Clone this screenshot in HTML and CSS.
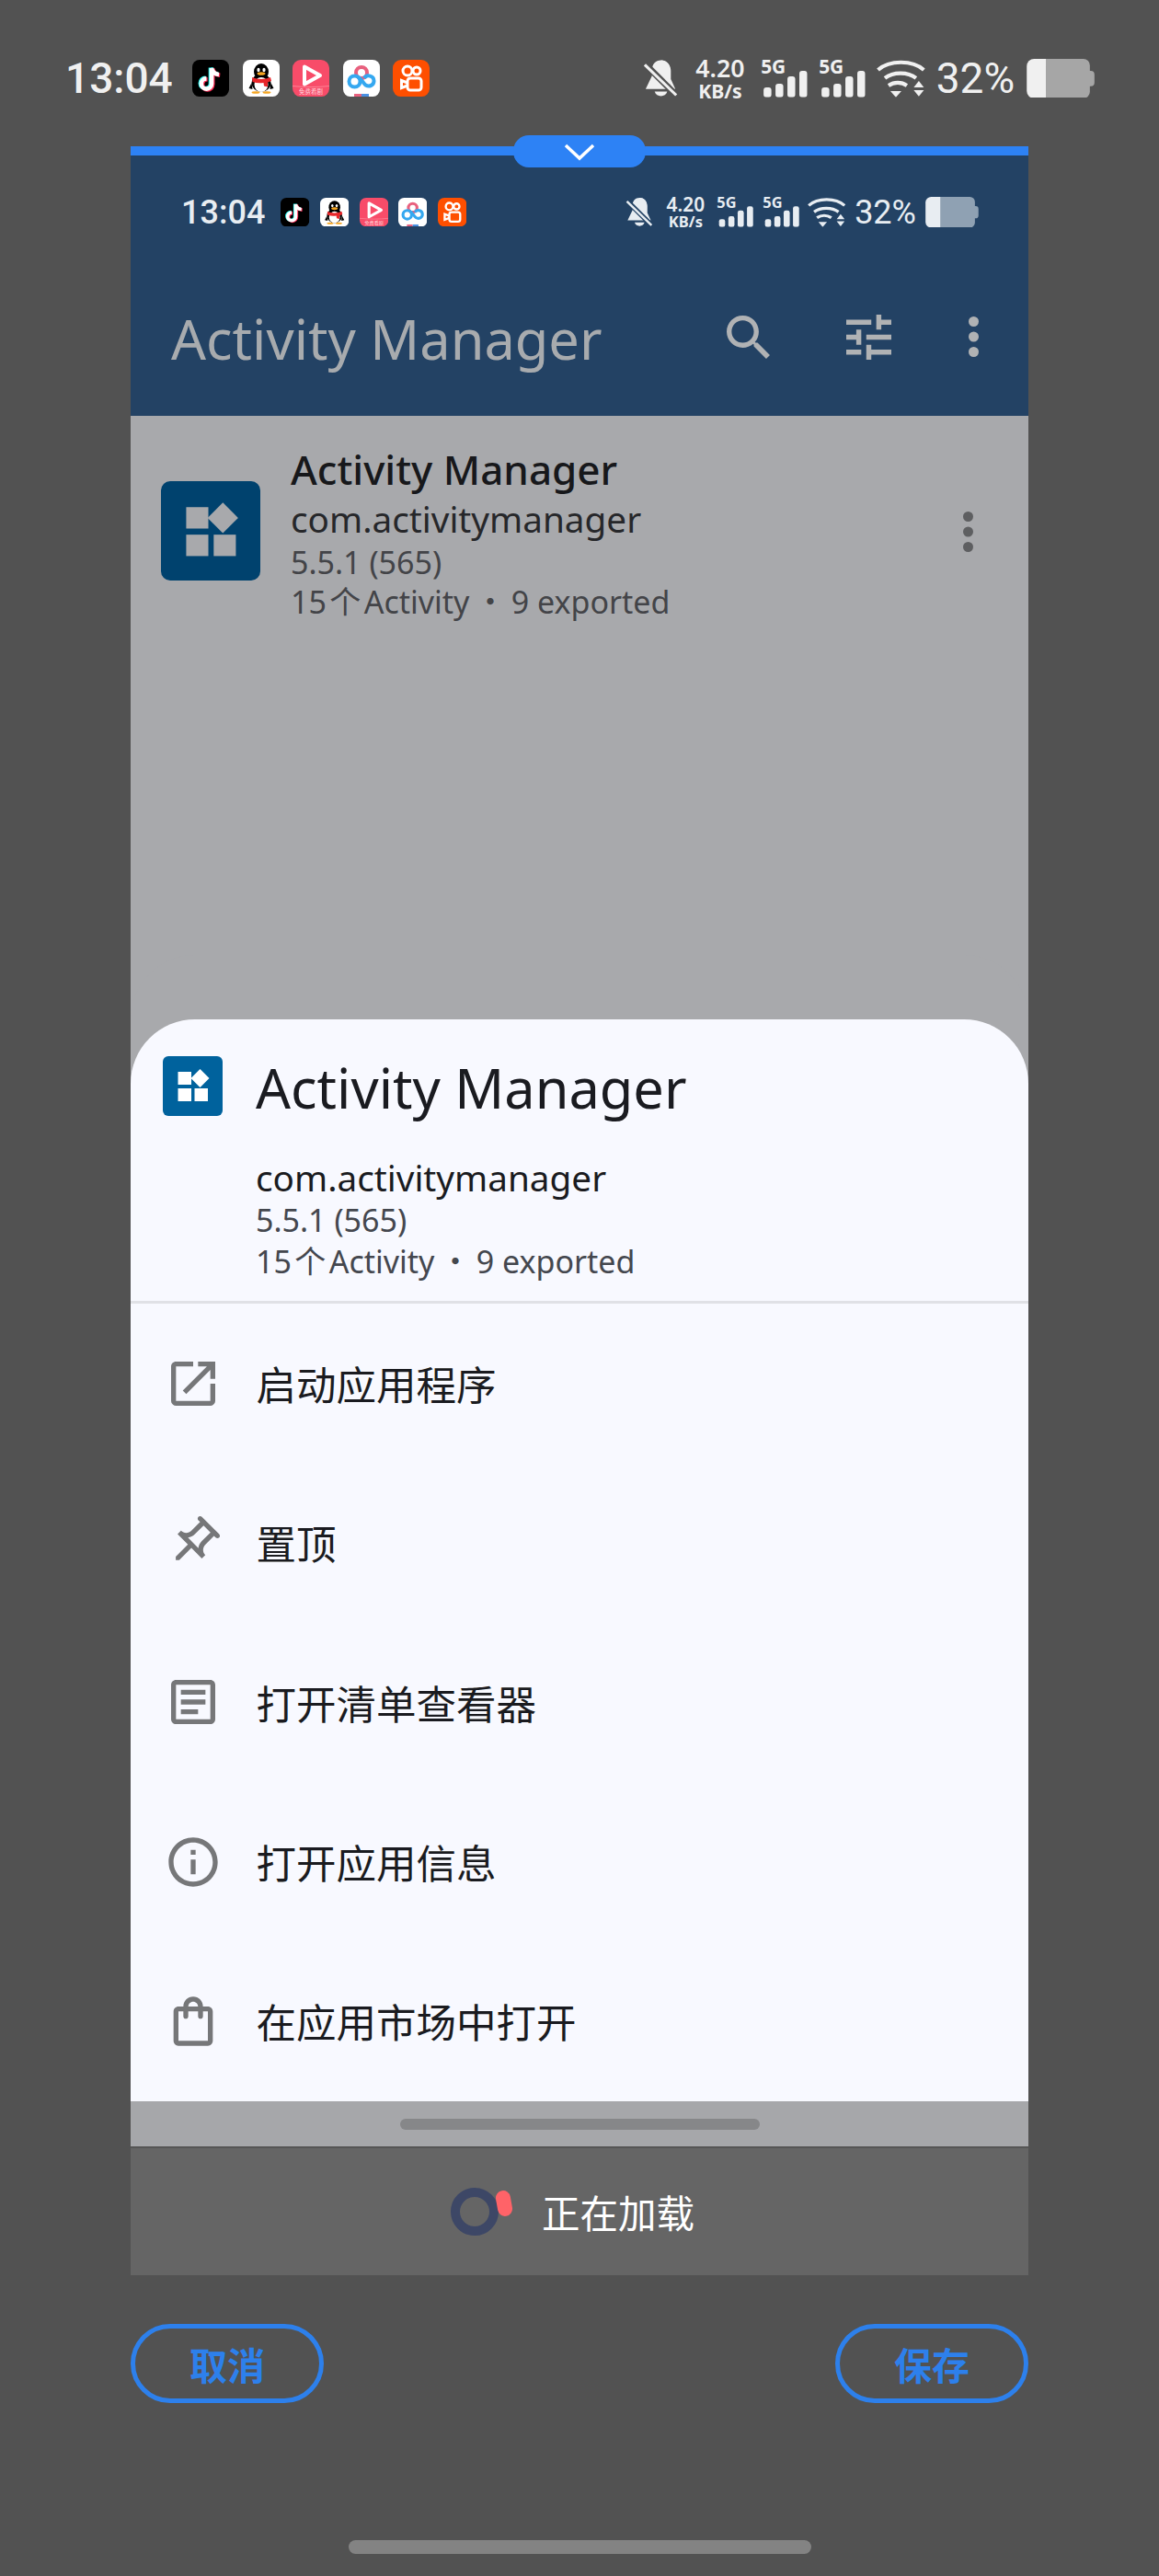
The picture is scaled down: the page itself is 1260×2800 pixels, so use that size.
FILE: index.html
```html
<!DOCTYPE html>
<html lang="en">
<head>
  <meta charset="UTF-8">
  <meta name="viewport" content="width=device-width, initial-scale=1.0">
  <title>Activity Manager</title>
  <link rel="stylesheet" href="styles.css">
</head>
<body>
<svg class="defs" width="0" height="0">
  <symbol id="app-tiktok" viewBox="0 0 40 40">
    <rect width="40" height="40" rx="8" fill="#000"/>
    <g fill="none" stroke-width="4.6">
      <path d="M21 9V26a5.6 5.6 0 1 1-5.6-5.6M21 9c.8 4 3.8 6.6 8 7" stroke="#25f4ee" transform="translate(-1 -.6)"/>
      <path d="M21 9V26a5.6 5.6 0 1 1-5.6-5.6M21 9c.8 4 3.8 6.6 8 7" stroke="#fe2c55" transform="translate(1.2 .8)"/>
      <path d="M21 9V26a5.6 5.6 0 1 1-5.6-5.6M21 9c.8 4 3.8 6.6 8 7" stroke="#fff"/>
    </g>
  </symbol>
  <symbol id="app-qq" viewBox="0 0 40 40">
    <rect width="40" height="40" rx="8" fill="#fff"/>
    <ellipse cx="20" cy="13" rx="8" ry="9" fill="#000"/>
    <ellipse cx="20" cy="25" rx="10.5" ry="10" fill="#000"/>
    <path d="M9.500 25 6.500 31l4 1zM30.500 25l3 6-4 1z" fill="#000"/>
    <ellipse cx="20" cy="27" rx="7.5" ry="8" fill="#fff"/>
    <ellipse cx="17" cy="11" rx="1.6" ry="2.2" fill="#fff"/>
    <ellipse cx="23" cy="11" rx="1.6" ry="2.2" fill="#fff"/>
    <ellipse cx="20" cy="15" rx="4.5" ry="1.8" fill="#f5a623"/>
    <path d="M10 19c6 2.600 14 2.600 20 0l1 4-4 1.500 0 5-4-1-.5-3.500c-4 .6-8 .4-12-1z" fill="#e8262a"/>
    <ellipse cx="14" cy="35.5" rx="4.5" ry="1.3" fill="#f5a623"/>
    <ellipse cx="26" cy="35.5" rx="4.5" ry="1.3" fill="#f5a623"/>
  </symbol>
  <symbol id="app-play" viewBox="0 0 40 40">
    <rect width="40" height="40" rx="9" fill="#f84c69"/>
    <path d="M13 7.500 30 17 13 26.500z" fill="none" stroke="#fff" stroke-width="4" stroke-linejoin="round"/>
    <path d="M0 28.500c13 1.400 27 1.400 40 0" fill="none" stroke="#ff9aa8" stroke-width=".7"/>
  </symbol>
  <symbol id="app-baidu" viewBox="0 0 40 40">
    <rect width="40" height="40" rx="8" fill="#fff"/>
    <g fill="none" stroke-width="4">
      <circle cx="20" cy="14" r="6" stroke="#e8607e"/>
      <circle cx="12.5" cy="23.5" r="6" stroke="#35a8f0"/>
      <path d="M16 19c4 1 5 6 8.500 8.500 4 2.500 9 0 9-4.500 0-6-8-7.500-10.500-3" stroke="#35a8f0"/>
    </g>
    <rect x="12" y="37" width="8" height="3" fill="#e8607e"/>
    <rect x="20" y="37" width="8" height="3" fill="#4a90e2"/>
  </symbol>
  <symbol id="app-kuaishou" viewBox="0 0 40 40">
    <rect width="40" height="40" rx="9" fill="#fe4f00"/>
    <g fill="none" stroke="#fff" stroke-width="3">
      <circle cx="16" cy="12" r="5"/>
      <circle cx="26" cy="12" r="4"/>
      <rect x="16" y="20" width="15" height="13" rx="3"/>
      <path d="M16 25 9.500 22.500v8L16 28"/>
    </g>
  </symbol>
  <symbol id="ic-bell" viewBox="0 0 40 42">
    <path d="M20 1c-6 0-10 4.500-10 11v6.500L3 33h27L30.500 12C30 5.500 26 1 20 1z" fill="currentColor"/>
    <path d="M20 1c7.500 0 11 6 11 12v9l5 11H32z" fill="currentColor"/>
    <path d="M13 36h14c-1 3.500-4 5-7 5s-6-1.500-7-5z" fill="currentColor"/>
    <path d="M2 5 37 40" stroke="var(--status-bg)" stroke-width="7"/>
    <path d="M2 6 37 40" stroke="currentColor" stroke-width="3.2"/>
  </symbol>
  <symbol id="ic-bars" viewBox="0 0 50 42">
    <g fill="currentColor">
      <rect x="2" y="31" width="8.5" height="11" rx="3"/>
      <rect x="15" y="27" width="8.5" height="15" rx="3"/>
      <rect x="28" y="19" width="8.5" height="23" rx="3"/>
      <rect x="41" y="13" width="8.5" height="29" rx="3"/>
    </g>
  </symbol>
  <symbol id="ic-wifi" viewBox="0 0 53 42">
    <g fill="none" stroke="currentColor" stroke-width="4.2">
      <path d="M1.500 12C14 1 39 1 51.500 12"/>
      <path d="M9 21c9-7 25-7 34 0"/>
      <path d="M15 30c6-4 14-4 20 0" transform="translate(-2 -1)"/>
    </g>
    <g fill="currentColor">
      <path d="M18 35h12l-6 7z" transform="translate(-3 0)"/>
      <path d="M46 24l5.500 7h-11z"/>
      <path d="M40.500 34h11L46 41z"/>
    </g>
  </symbol>
  <symbol id="ic-battery" viewBox="0 0 74 43">
    <path class="bat-rest" d="M21 0H62a7 7 0 0 1 7 7v6h1a4 4 0 0 1 4 4v9a4 4 0 0 1-4 4h-1v6a7 7 0 0 1-7 7H21z"/>
    <path d="M21 0H8a8 8 0 0 0-8 8V35a8 8 0 0 0 8 8H21z" fill="currentColor"/>
  </symbol>
  <symbol id="app-manager" viewBox="0 0 65 65">
    <rect width="65" height="65" rx="6" fill="currentColor"/>
    <g class="app-glyph">
      <rect x="16.500" y="17" width="14.500" height="14"/>
      <rect x="16.500" y="35" width="14.500" height="14"/>
      <rect x="34.500" y="35" width="14.500" height="14"/>
      <path d="M40.500 14 50.500 24 40.500 34 30.500 24z"/>
    </g>
  </symbol>
</svg>

<div class="screen">
  <div class="status status-outer">
    <div class="status-left">
      <span class="status-time">13:04</span>
      <div class="status-apps">
        <svg class="app-icon"><use href="#app-tiktok"/></svg>
        <svg class="app-icon"><use href="#app-qq"/></svg>
        <svg class="app-icon" viewBox="0 0 40 40"><use href="#app-play"/><text class="app-play-text" x="20" y="37" text-anchor="middle">免费看剧</text></svg>
        <svg class="app-icon"><use href="#app-baidu"/></svg>
        <svg class="app-icon"><use href="#app-kuaishou"/></svg>
      </div>
    </div>
    <div class="status-right">
      <svg class="st-bell"><use href="#ic-bell"/></svg>
      <div class="st-speed"><b>4.20</b><span>KB/s</span></div>
      <svg class="st-signal" viewBox="0 0 50 42"><use href="#ic-bars"/><text class="sig-text" x="-1" y="16">5G</text></svg>
      <svg class="st-signal st-signal-2" viewBox="0 0 50 42"><use href="#ic-bars"/><text class="sig-text" x="-1" y="16">5G</text></svg>
      <svg class="st-wifi"><use href="#ic-wifi"/></svg>
      <span class="st-percent">32%</span>
      <svg class="st-battery"><use href="#ic-battery"/></svg>
    </div>
  </div>

  <div class="frame">
    <div class="frame-handle">
      <svg width="34" height="20" viewBox="0 0 34 20"><path d="M2 3 17 17 32 3" fill="none" stroke="#fff" stroke-width="3.5"/></svg>
    </div>

    <header class="app-bar">
      <div class="status status-inner">
        <div class="status-left">
          <span class="status-time">13:04</span>
          <div class="status-apps">
            <svg class="app-icon"><use href="#app-tiktok"/></svg>
            <svg class="app-icon"><use href="#app-qq"/></svg>
            <svg class="app-icon" viewBox="0 0 40 40"><use href="#app-play"/><text class="app-play-text" x="20" y="37" text-anchor="middle">免费看剧</text></svg>
            <svg class="app-icon"><use href="#app-baidu"/></svg>
            <svg class="app-icon"><use href="#app-kuaishou"/></svg>
          </div>
        </div>
        <div class="status-right">
          <svg class="st-bell"><use href="#ic-bell"/></svg>
          <div class="st-speed"><b>4.20</b><span>KB/s</span></div>
          <svg class="st-signal" viewBox="0 0 50 42"><use href="#ic-bars"/><text class="sig-text" x="-1" y="16">5G</text></svg>
          <svg class="st-signal st-signal-2" viewBox="0 0 50 42"><use href="#ic-bars"/><text class="sig-text" x="-1" y="16">5G</text></svg>
          <svg class="st-wifi"><use href="#ic-wifi"/></svg>
          <span class="st-percent">32%</span>
          <svg class="st-battery"><use href="#ic-battery"/></svg>
        </div>
      </div>
      <div class="toolbar">
        <h1 class="toolbar-title">Activity Manager</h1>
        <svg class="tb-search" viewBox="3 3 17.5 17.5"><path d="M15.5 14h-.79l-.28-.27C15.41 12.59 16 11.11 16 9.5 16 5.91 13.09 3 9.5 3S3 5.91 3 9.5 5.91 16 9.5 16c1.61 0 3.09-.59 4.23-1.57l.27.28v.79l5 4.99L20.49 19l-4.99-5zm-6 0C7.01 14 5 11.99 5 9.5S7.01 5 9.5 5 14 7.01 14 9.5 11.99 14 9.5 14z"/></svg>
        <svg class="tb-tune" viewBox="3 3 18 18"><path d="M3 17v2h6v-2H3zM3 5v2h10V5H3zm10 16v-2h8v-2h-8v-2h-2v6h2zM7 9v2H3v2h4v2h2V9H7zm14 4v-2H11v2h10zm-6-4h2V7h4V5h-4V3h-2v6z"/></svg>
        <svg class="tb-more" viewBox="0 0 11 44"><circle cx="5.5" cy="5.5" r="5.5"/><circle cx="5.5" cy="22" r="5.5"/><circle cx="5.5" cy="38.5" r="5.5"/></svg>
      </div>
    </header>

    <section class="app-list">
      <div class="list-row">
        <svg class="list-icon"><use href="#app-manager"/></svg>
        <div class="list-text">
          <div class="list-name">Activity Manager</div>
          <div class="list-pkg">com.activitymanager</div>
          <div class="list-meta">5.5.1 (565)</div>
          <div class="list-meta">15&#8202;个&#8202;Activity&#8201;・&#8201;9 exported</div>
        </div>
        <svg class="list-more" viewBox="0 0 11 44"><circle cx="5.5" cy="5.5" r="5.5"/><circle cx="5.5" cy="22" r="5.5"/><circle cx="5.5" cy="38.5" r="5.5"/></svg>
      </div>
    </section>

    <section class="sheet">
      <div class="sheet-head">
        <svg class="sheet-icon"><use href="#app-manager"/></svg>
        <div class="sheet-info">
          <h2 class="sheet-title">Activity Manager</h2>
          <div class="sheet-pkg">com.activitymanager</div>
          <div class="sheet-meta">5.5.1 (565)</div>
          <div class="sheet-meta">15&#8202;个&#8202;Activity&#8201;・&#8201;9 exported</div>
        </div>
      </div>
      <ul class="menu">
        <li class="menu-item">
          <svg viewBox="0 0 24 24"><path d="M19 19H5V5h7V3H5c-1.11 0-2 .9-2 2v14c0 1.1.89 2 2 2h14c1.1 0 2-.9 2-2v-7h-2v7zM14 3v2h3.59l-9.83 9.83 1.41 1.41L19 6.41V10h2V3h-7z"/></svg>
          <span>启动应用程序</span>
        </li>
        <li class="menu-item">
          <svg viewBox="0 0 24 24"><path transform="rotate(45 12 12)" d="M14 4v5c0 1.12.37 2.16 1 3H9c.65-.86 1-1.9 1-3V4h4m3-2H7c-.55 0-1 .45-1 1s.45 1 1 1h1v5c0 1.66-1.34 3-3 3v2h5.97v7l1 1 1-1v-7H19v-2c-1.66 0-3-1.34-3-3V4h1c.55 0 1-.45 1-1s-.45-1-1-1z"/></svg>
          <span>置顶</span>
        </li>
        <li class="menu-item">
          <svg viewBox="0 0 24 24"><path d="M19 5v14H5V5h14m0-2H5c-1.1 0-2 .9-2 2v14c0 1.1.9 2 2 2h14c1.1 0 2-.9 2-2V5c0-1.1-.9-2-2-2z"/><path d="M14 17H7v-2h7v2zm3-4H7v-2h10v2zm0-4H7V7h10v2z"/></svg>
          <span>打开清单查看器</span>
        </li>
        <li class="menu-item">
          <svg viewBox="0 0 24 24"><path d="M11 7h2v2h-2zm0 4h2v6h-2zm1-9C6.48 2 2 6.48 2 12s4.48 10 10 10 10-4.48 10-10S17.52 2 12 2zm0 18c-4.41 0-8-3.59-8-8s3.59-8 8-8 8 3.59 8 8-3.59 8-8 8z"/></svg>
          <span>打开应用信息</span>
        </li>
        <li class="menu-item">
          <svg viewBox="0 0 24 24"><path d="M18 6h-2c0-2.21-1.79-4-4-4S8 3.79 8 6H6c-1.1 0-2 .9-2 2v12c0 1.1.9 2 2 2h12c1.1 0 2-.9 2-2V8c0-1.1-.9-2-2-2zm-6-2c1.1 0 2 .9 2 2h-4c0-1.1.9-2 2-2zm6 16H6V8h2v2c0 .55.45 1 1 1s1-.45 1-1V8h4v2c0 .55.45 1 1 1s1-.45 1-1V8h2v12z"/></svg>
          <span>在应用市场中打开</span>
        </li>
      </ul>
    </section>

    <div class="inner-nav"><div class="inner-nav-bar"></div></div>

    <div class="loading">
      <svg class="loading-spin" viewBox="0 0 68 54">
        <circle cx="26" cy="27" r="21" fill="none" stroke="#3d4766" stroke-width="10"/>
        <rect x="50" y="4" width="16" height="28" rx="8" fill="#ff6368" transform="rotate(-10 58 18)"/>
      </svg>
      <span>正在加载</span>
    </div>
  </div>

  <div class="actions">
    <button class="action-btn">取消</button>
    <button class="action-btn">保存</button>
  </div>

  <div class="home-bar"></div>
</div>
</body>
</html>
```

FILE: styles.css
```css
* {
  margin: 0;
  padding: 0;
  box-sizing: border-box;
}

body {
  font-family: "Noto Sans", "Noto Sans CJK SC", sans-serif;
  background: #525252;
}

.defs {
  position: absolute;
}

.screen {
  width: 1260px;
  height: 2800px;
  background: #525252;
  display: flex;
  flex-direction: column;
  overflow: hidden;
}

/* status bar, all sizes in em so the inner copy is just a smaller font */
.status {
  display: flex;
  justify-content: space-between;
  align-items: center;
  font-family: Roboto, sans-serif;
  font-weight: 500;
  line-height: 1;
}

.status-outer {
  font-size: 46px;
  color: #f0f0f0;
  height: 159px;
  padding: 11px 70px 0 71px;
  --status-bg: #525252;
  --bat: #a6a6a6;
}

.status-inner {
  font-size: 36px;
  color: #e8edf2;
  height: 123px;
  padding: 0 54px 0 55px;
  --status-bg: #234264;
  --bat: #8fa1b3;
}

.status-left,
.status-right,
.status-apps {
  display: flex;
  align-items: center;
}

.status-time {
  margin-right: .47em;
}

.status-apps {
  gap: .315em;
}

.app-icon {
  width: .87em;
  height: .87em;
}

.app-play-text {
  font: 6.5px "Noto Sans CJK SC", sans-serif;
  fill: #ffd8de;
}

.sig-text {
  font: 700 21px "Noto Sans", sans-serif;
  fill: currentColor;
}

.st-bell {
  width: .85em;
  height: .91em;
}

.st-speed {
  display: flex;
  flex-direction: column;
  align-items: center;
  margin-left: .39em;
  width: 1.17em;
  font-family: "Noto Sans", sans-serif;
}

.st-speed b {
  font-size: .58em;
  font-weight: 600;
  line-height: 1;
}

.st-speed span {
  font-size: .46em;
  font-weight: 700;
  line-height: 1;
}

.st-signal {
  width: 1.09em;
  height: .91em;
  margin-left: .39em;
  overflow: visible;
}

.st-signal-2 {
  margin-left: .28em;
}

.st-wifi {
  width: 1.15em;
  height: .91em;
  margin-left: .26em;
}

.st-percent {
  font-weight: 400;
  margin-left: .26em;
}

.st-battery {
  width: 1.61em;
  height: .93em;
  margin-left: .28em;
}

.bat-rest {
  fill: var(--bat);
}

/* phone frame */
.frame {
  position: relative;
  width: 976px;
  margin: 0 142px;
  border-top: 10px solid #2d82f5;
}

.frame-handle {
  position: absolute;
  top: -22px;
  left: 416px;
  width: 144px;
  height: 35px;
  border-radius: 17px;
  background: #2d82f5;
  display: flex;
  align-items: center;
  justify-content: center;
}

.app-bar {
  height: 283px;
  background: #234264;
}

.toolbar {
  display: flex;
  align-items: center;
  height: 160px;
  padding: 0 0 12px 44px;
  fill: #b0b2b4;
}

.toolbar-title {
  font-size: 59.5px;
  font-weight: 400;
  color: #a8abae;
  line-height: 1;
  flex: 1;
  margin-top: 3px;
}

.tb-search {
  width: 47px;
  height: 47px;
}

.tb-tune {
  width: 49px;
  height: 49px;
  margin-left: 83px;
}

.tb-more {
  width: 11px;
  height: 44px;
  margin: 0 54px 0 84px;
}

/* list behind the sheet */
.app-list {
  height: 656px;
  background: #a8a9ac;
}

.list-row {
  display: flex;
  padding: 30px 60px 0 33px;
}

.list-icon {
  width: 108px;
  height: 108px;
  margin: 41px 33px 0 0;
  color: #00426e;
  --glyph: #a8a9ac;
}

.list-text {
  flex: 1;
}

.list-name {
  font-size: 44px;
  font-weight: 500;
  line-height: 56px;
  color: #17181b;
}

.list-pkg {
  font-size: 38.7px;
  line-height: 52px;
  color: #26272a;
}

.list-meta {
  font-size: 34px;
  line-height: 43px;
  color: #434448;
}

.list-more {
  width: 11px;
  height: 44px;
  margin-top: 74px;
  fill: #5e5f61;
}

/* bottom sheet */
.sheet {
  height: 1176px;
  background: #f8f9ff;
  border-radius: 70px 70px 0 0;
  position: relative;
  box-shadow: 0 -70px 0 0 #a8a9ac;
}

.sheet-head {
  display: flex;
  height: 309px;
  padding: 40px 0 0 35px;
  border-bottom: 3px solid #e0e1e6;
}

.sheet-icon {
  width: 65px;
  height: 65px;
  color: #00629d;
  --glyph: #fff;
  margin-right: 36px;
  flex: none;
}

.app-glyph {
  fill: var(--glyph);
}

.sheet-info {
  margin-top: -9px;
}

.sheet-title {
  font-size: 59.5px;
  font-weight: 400;
  line-height: 86px;
  color: #1a1b20;
  margin-bottom: 31px;
}

.sheet-pkg {
  font-size: 38.7px;
  line-height: 48px;
  color: #1a1b20;
}

.sheet-meta {
  font-size: 34px;
  line-height: 45px;
  color: #44474e;
}

.menu {
  list-style: none;
}

.menu-item {
  display: flex;
  align-items: center;
  gap: 36.5px;
  height: 173.3px;
  padding-left: 36px;
  font-size: 43.5px;
  color: #1a1b20;
}

.menu-item svg {
  width: 64px;
  height: 64px;
  fill: #767779;
  flex: none;
}

.inner-nav {
  height: 49px;
  background: #a6a7aa;
  display: flex;
  justify-content: center;
  padding-top: 19px;
  position: relative;
}

.inner-nav-bar {
  width: 391px;
  height: 12px;
  border-radius: 6px;
  background: #868789;
}

.loading {
  height: 140px;
  background: #656565;
  border-top: 2px solid #555;
  display: flex;
  align-items: center;
  justify-content: center;
  gap: 31px;
  padding-right: 15px;
  font-size: 41.5px;
  color: #fff;
}

.loading-spin {
  width: 68px;
  height: 54px;
}

.actions {
  display: flex;
  justify-content: space-between;
  padding: 53px 142px 0;
}

.action-btn {
  width: 210px;
  height: 86px;
  border: 5px solid #2d80ec;
  border-radius: 43px;
  background: transparent;
  color: #2d80ec;
  font-family: "Noto Sans CJK SC", sans-serif;
  font-size: 41px;
  font-weight: 700;
}

.home-bar {
  width: 503px;
  height: 15px;
  margin: 149px auto 0;
  border-radius: 8px;
  background: #838383;
}
```
